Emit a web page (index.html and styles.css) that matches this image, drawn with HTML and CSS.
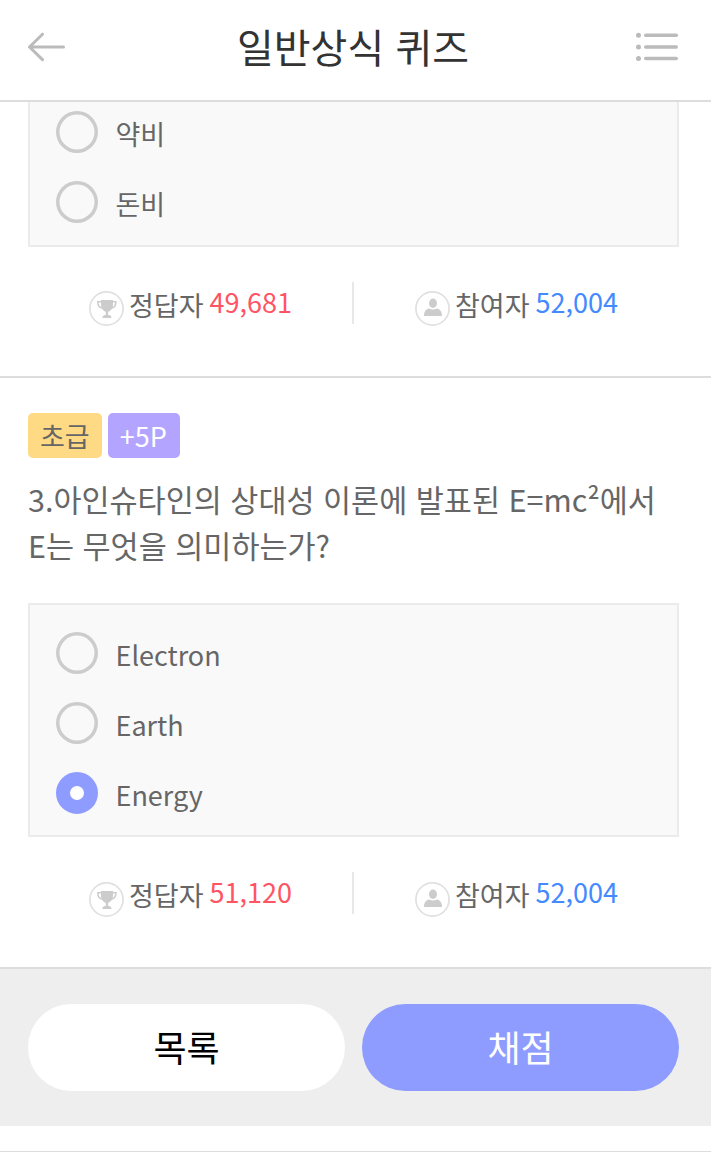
FILE: index.html
```html
<!DOCTYPE html>
<html lang="ko">
<head>
    <meta charset="UTF-8">
    <meta name="viewport" content="width=device-width, initial-scale=1.0">
    <title>일반상식 퀴즈</title>
    <link rel="stylesheet" href="styles.css">
</head>
<body>

<!-- Shared stat icons -->
<svg class="defs" width="0" height="0">
    <symbol id="trophy" viewBox="0 0 35 35">
        <circle cx="17.5" cy="17.5" r="16.6" fill="#fff" stroke="#e0e0e0" stroke-width="1.7"/>
        <path d="M12 9h12v4.500c0 4-2.700 6.800-4.900 7.300v3.200h1.200l2 1.200v1.800h-8.700v-1.800l2-1.200h1.200v-3.200c-2.200-.5-4.800-3.300-4.800-7.300z" fill="#ccc"/>
        <path d="M12.500 10.700H8.800c0 3.800 1.700 6.100 5 6.600M23.200 10.700h3.700c0 3.800-1.700 6.100-5 6.600" fill="none" stroke="#ccc" stroke-width="1.500"/>
    </symbol>
    <symbol id="person" viewBox="0 0 35 35">
        <circle cx="17.5" cy="17.5" r="16.6" fill="#fff" stroke="#e0e0e0" stroke-width="1.7"/>
        <ellipse cx="18" cy="12.200" rx="4" ry="4.700" fill="#ccc"/>
        <path d="M9 25c0-4.500 2-6.800 5.200-7.400 2.300 1.300 5.300 1.300 7.600 0 3.200.6 5.200 2.900 5.200 7.400z" fill="#ccc"/>
    </symbol>
</svg>

<header class="header">
    <svg class="back" width="38" height="30" viewBox="0 0 38 30">
        <path d="M35.500 15H2M14.500 2.200L1.500 15L14.500 27.600" fill="none" stroke="#bbb" stroke-width="3" stroke-linecap="round" stroke-linejoin="round"/>
    </svg>
    <h1>일반상식 퀴즈</h1>
    <svg class="menu" width="43" height="30" viewBox="0 0 43 30">
        <g fill="#bbb">
            <circle cx="2.500" cy="3.300" r="2.500"/>
            <circle cx="2.500" cy="15" r="2.500"/>
            <circle cx="2.500" cy="26.600" r="2.500"/>
            <rect x="8" y="1.500" width="34" height="3.500" rx="1.700"/>
            <rect x="8" y="13.200" width="34" height="3.600" rx="1.700"/>
            <rect x="8" y="24.800" width="34" height="3.500" rx="1.700"/>
        </g>
    </svg>
</header>

<main>
    <section class="quiz">
        <div class="options scrolled">
            <div class="option"><span class="radio"></span><span class="name">약비</span></div>
            <div class="option"><span class="radio"></span><span class="name">돈비</span></div>
        </div>
        <div class="stats">
            <div class="stat">
                <svg class="icon"><use href="#trophy"/></svg>
                <span class="label">정답자</span><span class="num red">49,681</span>
            </div>
            <div class="stat">
                <svg class="icon"><use href="#person"/></svg>
                <span class="label">참여자</span><span class="num blue">52,004</span>
            </div>
        </div>
    </section>

    <section class="quiz">
        <div class="tags">
            <span class="tag level">초급</span>
            <span class="tag point">+5P</span>
        </div>
        <h2>3.아인슈타인의 상대성 이론에 발표된 E=mc²에서<br>E는 무엇을 의미하는가?</h2>
        <div class="options">
            <div class="option"><span class="radio"></span><span class="name">Electron</span></div>
            <div class="option"><span class="radio"></span><span class="name">Earth</span></div>
            <div class="option"><span class="radio checked"></span><span class="name">Energy</span></div>
        </div>
        <div class="stats last">
            <div class="stat">
                <svg class="icon"><use href="#trophy"/></svg>
                <span class="label">정답자</span><span class="num red">51,120</span>
            </div>
            <div class="stat">
                <svg class="icon"><use href="#person"/></svg>
                <span class="label">참여자</span><span class="num blue">52,004</span>
            </div>
        </div>
    </section>
</main>

<div class="buttons">
    <button class="btn">목록</button>
    <button class="btn primary">채점</button>
</div>
<div class="bottom-line"></div>

</body>
</html>
```
FILE: styles.css
```css
* {
    box-sizing: border-box;
}
body {
    margin: 0;
    height: 1152px;
    overflow: hidden;
    background-color: #fff;
    color: #666;
    font-family: "Noto Sans CJK KR", sans-serif;
    font-size: 27px;
}
.defs {
    display: block;
}
.header {
    display: flex;
    justify-content: space-between;
    height: 102px;
    padding: 0 32px 0 28px;
    border-bottom: 2px solid #ddd;
}
.header svg {
    margin-top: 32px;
}
.header h1 {
    margin: 16px 0 0 4px;
    font-size: 40px;
    font-weight: 400;
    line-height: 60px;
    color: #333;
}
.quiz {
    padding: 0 32px 0 28px;
    border-bottom: 2px solid #ddd;
}
.options {
    height: 234px;
    padding: 27px 26px 0;
    border: 2px solid #ebebeb;
    background-color: #f9f9f9;
}
/* upper part of the box is behind the header */
.options.scrolled {
    height: 145px;
    padding-top: 9px;
    border-top: none;
}
.option {
    display: flex;
    gap: 17.5px;
    height: 70px;
}
.radio {
    width: 42px;
    height: 42px;
    border-radius: 50%;
    box-shadow: inset 0 0 0 3.5px #ccc;
}
.radio.checked {
    border: 14px solid #8e9cff;
    background-color: #fff;
    box-shadow: none;
}
.name {
    padding-top: 2px;
    line-height: 42px;
}
.stats {
    display: grid;
    grid-template-columns: 324px 327px;
    height: 129px;
    padding-top: 35px;
}
.stats.last {
    height: 130px;
}
.stat {
    display: flex;
    height: 42px;
    padding-left: 61px;
}
.stat + .stat {
    border-left: 2px solid #e8e8e8;
}
.icon {
    width: 35px;
    height: 35px;
    margin-top: 9px;
}
.last .icon {
    margin-top: 10px;
}
.label {
    margin: 2px 0 0 5px;
    line-height: 42px;
}
.num {
    margin: -1px 0 0 6px;
    line-height: 42px;
}
.red {
    color: #ff5463;
}
.blue {
    color: #448aff;
}
.tags {
    display: flex;
    gap: 6px;
    padding-top: 35px;
}
.tag {
    height: 45px;
    padding: 0 12px;
    border-radius: 5px;
    line-height: 45px;
}
.level {
    background-color: #ffda85;
}
.point {
    width: 72px;
    background-color: #b3a5ff;
    color: #fff;
}
.quiz h2 {
    height: 145px;
    margin: 0;
    padding-top: 18px;
    font-size: 30.5px;
    font-weight: 400;
    line-height: 46px;
    white-space: nowrap;
}
.buttons {
    display: flex;
    gap: 17px;
    height: 157px;
    padding: 35px 32px 0 28px;
    background-color: #eee;
}
.btn {
    flex: 1;
    height: 87px;
    padding: 0 0 3px;
    border: none;
    border-radius: 44px;
    background-color: #fff;
    color: #000;
    font-family: inherit;
    font-size: 36px;
}
.btn.primary {
    background-color: #8e9cff;
    color: #fff;
}
.bottom-line {
    height: 26px;
    border-bottom: 1px solid #ddd;
}
```
